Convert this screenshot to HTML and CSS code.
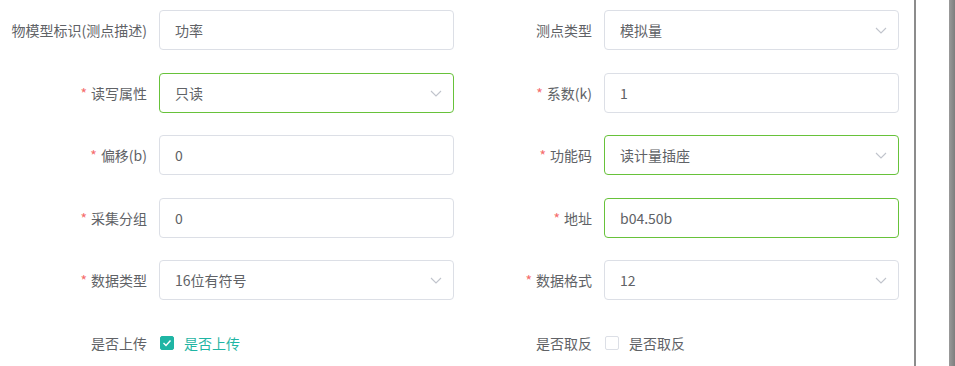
FILE: index.html
```html
<!DOCTYPE html>
<html>
<head>
    <meta charset="UTF-8">
    <meta name="viewport" content="width=device-width, initial-scale=1.0">
    <title>测点编辑</title>
    <link rel="stylesheet" href="styles.css">
</head>
<body>
    <div class="page">
        <form class="point-form">
            <label class="form-label">物模型标识(测点描述)</label>
            <div class="input">功率</div>
            <label class="form-label">测点类型</label>
            <div class="input select">模拟量
                <svg class="arrow" width="12" height="7" viewBox="0 0 12 7"><path d="M1 1l5 5 5-5" /></svg>
            </div>

            <label class="form-label required">读写属性</label>
            <div class="input select is-success">只读
                <svg class="arrow" width="12" height="7" viewBox="0 0 12 7"><path d="M1 1l5 5 5-5" /></svg>
            </div>
            <label class="form-label required">系数(k)</label>
            <div class="input">1</div>

            <label class="form-label required">偏移(b)</label>
            <div class="input">0</div>
            <label class="form-label required">功能码</label>
            <div class="input select is-success">读计量插座
                <svg class="arrow" width="12" height="7" viewBox="0 0 12 7"><path d="M1 1l5 5 5-5" /></svg>
            </div>

            <label class="form-label required">采集分组</label>
            <div class="input">0</div>
            <label class="form-label required">地址</label>
            <div class="input is-success">b04.50b</div>

            <label class="form-label required">数据类型</label>
            <div class="input select">16位有符号
                <svg class="arrow" width="12" height="7" viewBox="0 0 12 7"><path d="M1 1l5 5 5-5" /></svg>
            </div>
            <label class="form-label required">数据格式</label>
            <div class="input select">12
                <svg class="arrow" width="12" height="7" viewBox="0 0 12 7"><path d="M1 1l5 5 5-5" /></svg>
            </div>

            <label class="form-label">是否上传</label>
            <div class="check-row">
                <span class="checkbox checked">
                    <svg width="10" height="8" viewBox="0 0 10 8"><path d="M1.5 4l2.5 2.5 4.5-5" /></svg>
                </span>
                <span class="check-text checked">是否上传</span>
            </div>
            <label class="form-label">是否取反</label>
            <div class="check-row">
                <span class="checkbox"></span>
                <span class="check-text">是否取反</span>
            </div>
        </form>
        <div class="divider"></div>
        <div class="gap"></div>
        <div class="scrollbar"></div>
    </div>
</body>
</html>
```

FILE: styles.css
```css
body {
    margin: 0;
    background-color: #fff;
    color: #606266;
    font-family: "Noto Sans CJK SC", "Liberation Sans", sans-serif;
    font-size: 14px;
}
.page {
    display: flex;
    height: 366px;
    overflow: hidden;
}
.point-form {
    width: 914px;
    padding-top: 10px;
    display: grid;
    grid-template-columns: 147px 295px 126px 295px;
    grid-auto-rows: 40px;
    column-gap: 12px;
    row-gap: 22.5px;
    align-content: start;
}
.form-label {
    display: flex;
    align-items: center;
    justify-content: flex-end;
    white-space: nowrap;
    color: #606266;
}
.form-label.required::before {
    content: "*";
    color: #f56c6c;
    margin-right: 4px;
}
.input {
    position: relative;
    box-sizing: border-box;
    height: 40px;
    border: 1px solid #dcdfe6;
    border-radius: 4px;
    padding: 0 15px;
    display: flex;
    align-items: center;
    color: #606266;
    background-color: #fff;
}
.input.is-success {
    border-color: #67c23a;
}
.select .arrow {
    position: absolute;
    right: 11px;
    top: 16px;
}
.arrow path {
    fill: none;
    stroke: #c0c4cc;
    stroke-width: 1.1;
}
.check-row {
    display: flex;
    align-items: center;
    padding-left: 1px;
}
.checkbox {
    box-sizing: border-box;
    width: 14px;
    height: 14px;
    border: 1px solid #dcdfe6;
    border-radius: 2px;
    display: flex;
    align-items: center;
    justify-content: center;
    margin-right: 10px;
    background-color: #fff;
}
.checkbox.checked {
    background-color: #1fb5a4;
    border-color: #1fb5a4;
}
.checkbox path {
    fill: none;
    stroke: #fff;
    stroke-width: 1.4;
}
.check-text.checked {
    color: #1fb5a4;
}
.divider {
    width: 2px;
    background-color: #8c8c8c;
}
.gap {
    width: 33px;
}
.scrollbar {
    flex: 1;
    background: linear-gradient(to right, #9a9a9a, #7e7e7e);
}
```
